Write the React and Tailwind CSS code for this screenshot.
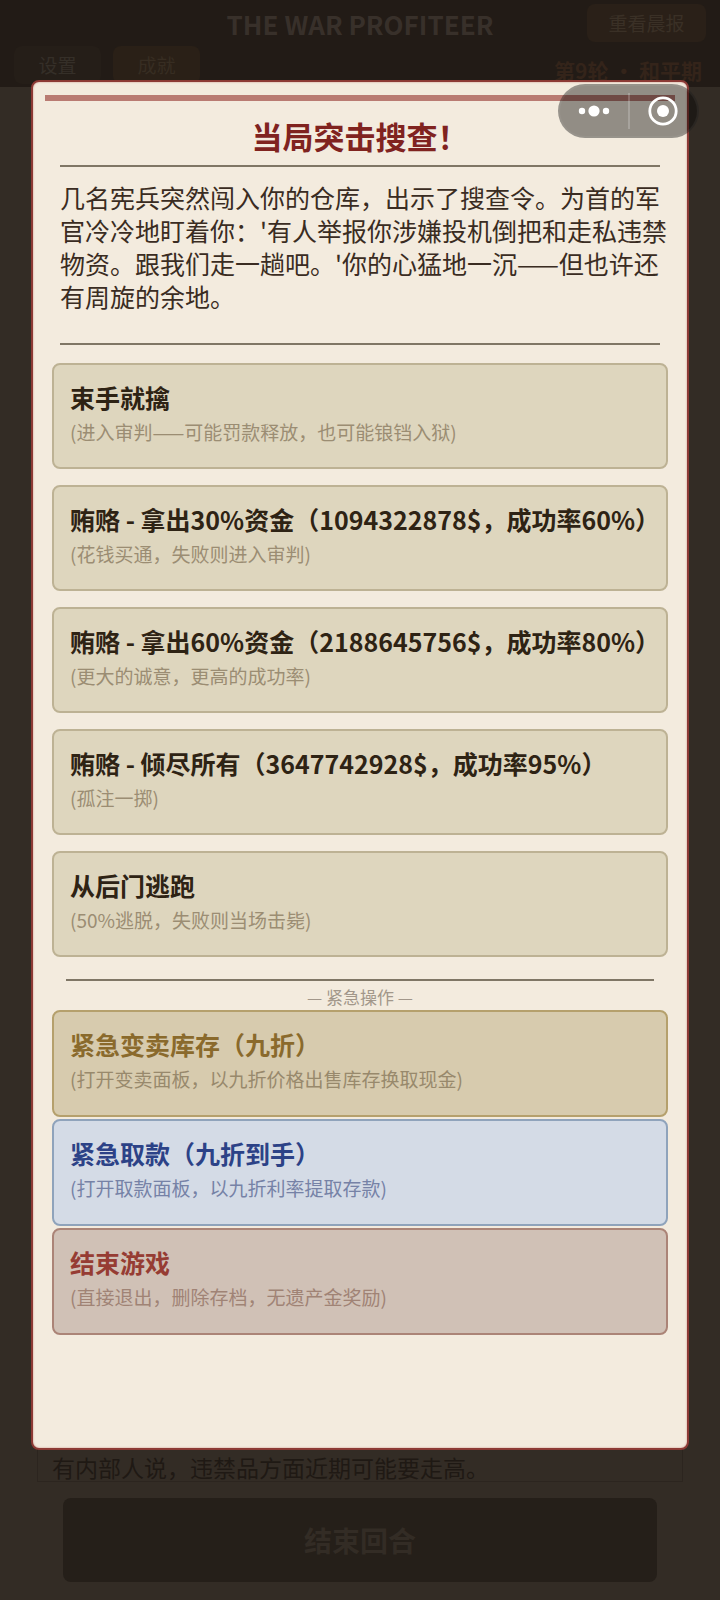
import clsx from "clsx";

const choices = [
  { title: "束手就擒", note: "(进入审判——可能罚款释放，也可能锒铛入狱)" },
  { title: "贿赂 - 拿出30%资金（1094322878$，成功率60%）", note: "(花钱买通，失败则进入审判)" },
  { title: "贿赂 - 拿出60%资金（2188645756$，成功率80%）", note: "(更大的诚意，更高的成功率)" },
  { title: "贿赂 - 倾尽所有（3647742928$，成功率95%）", note: "(孤注一掷)" },
  { title: "从后门逃跑", note: "(50%逃脱，失败则当场击毙)" },
];

const emergencyActions = [
  {
    title: "紧急变卖库存（九折）",
    note: "(打开变卖面板，以九折价格出售库存换取现金)",
    box: "border-[#b5a06c] bg-[#d7cbae]",
    titleColor: "text-[#8a6a2c]",
    noteColor: "text-[#98896c]",
  },
  {
    title: "紧急取款（九折到手）",
    note: "(打开取款面板，以九折利率提取存款)",
    box: "border-[#8fa3bb] bg-[#d4dbe6]",
    titleColor: "text-[#2c4287]",
    noteColor: "text-[#7682a6]",
  },
  {
    title: "结束游戏",
    note: "(直接退出，删除存档，无遗产金奖励)",
    box: "border-[#ab8477] bg-[#d0c1b6]",
    titleColor: "text-[#963c33]",
    noteColor: "text-[#a08375]",
  },
];

const ChoiceButton = ({ title, note, box, titleColor, noteColor }) => (
  <button
    className={clsx(
      "flex w-full flex-col items-start rounded-lg border-2 px-4 pt-3.5 text-left whitespace-nowrap",
      box ? "h-[107px]" : "h-[106px] border-[#bdb294] bg-[#ded6be]",
      box
    )}
  >
    <span className={clsx("text-[25px] leading-9 font-bold", titleColor || "text-[#2e2314]")}>{title}</span>
    <span className={clsx("text-[19px] leading-[34px]", noteColor || "text-[#9b8d73]")}>{note}</span>
  </button>
);

// Mini-program capsule in the top right corner
const Capsule = () => (
  <div className="absolute top-[84px] right-[21px] flex h-[54px] w-[141px] items-center rounded-full border-2 border-white/5 bg-black/40">
    <button aria-label="更多" className="flex flex-1 justify-center">
      <svg width="32" height="12" viewBox="0 0 32 12" fill="#fff">
        <circle cx="4" cy="6" r="3.2" />
        <circle cx="16" cy="6" r="5.6" />
        <circle cx="28" cy="6" r="3.2" />
      </svg>
    </button>
    <span className="h-9 w-0.5 bg-white/20" />
    <button aria-label="关闭" className="flex flex-1 justify-center">
      <svg width="30" height="30" viewBox="0 0 30 30">
        <circle cx="15" cy="15" r="13.2" fill="none" stroke="#fff" strokeWidth="2.8" />
        <circle cx="15" cy="15" r="6" fill="#fff" />
      </svg>
    </button>
  </div>
);

const GameScreen = () => (
  <div className="flex min-h-screen flex-col bg-[#332c25]">
    <header className="h-[87px] bg-[#221b16] px-3.5">
      <div className="grid h-[46px] grid-cols-[1fr_auto_1fr] items-center">
        <span />
        <h1 className="text-[26px] font-bold text-[#38302a]">THE WAR PROFITEER</h1>
        <button className="h-[38px] w-[119px] justify-self-end rounded-lg bg-[#2a2018] text-[19px] text-[#3a3026]">
          重看晨报
        </button>
      </div>
      <div className="flex items-start justify-between">
        <div className="flex gap-3">
          <button className="h-[38px] w-[87px] rounded-lg bg-[#251e18] text-[19px] text-[#352f28]">设置</button>
          <button className="h-[38px] w-[87px] rounded-lg bg-[#2a2017] text-[19px] text-[#372d22]">成就</button>
        </div>
        <p className="mt-2 pr-1 text-[21px] leading-8 font-bold text-[#34241a]">第9轮 · 和平期</p>
      </div>
    </header>
    <main className="mx-[37px] flex flex-1 flex-col justify-end border-x border-b border-[#2c251f] px-3.5">
      <p className="text-[23px] leading-7 text-[#1f1914]">有内部人说，违禁品方面近期可能要走高。</p>
    </main>
    <footer className="px-[63px] pt-4 pb-[18px]">
      <button className="h-21 w-full rounded-lg bg-[#251f19] text-[28px] font-bold text-[#332c25]">结束回合</button>
    </footer>
  </div>
);

const RaidDialog = () => (
  <section
    role="dialog"
    aria-labelledby="raid-title"
    className="absolute inset-x-[31px] top-20 rounded-lg border-2 border-[#8c3a35] bg-[#f3ebde] pt-[13px] pb-[113px] shadow-[inset_0_0_2px_#c98a80]"
  >
    <div className="mx-3 h-1.5 bg-[#b97b72]" />
    <div className="mx-[27px]">
      <h2 id="raid-title" className="mt-3.5 border-b-2 border-[#7f7665] pb-2 text-center text-[31px] leading-[42px] font-bold text-[#80231f]">
        当局突击搜查！
      </h2>
      <p className="-mr-2.5 mt-3.5 text-[25px] leading-[33px] text-[#3a2c22]">
        几名宪兵突然闯入你的仓库，出示了搜查令。为首的军官冷冷地盯着你：'有人举报你涉嫌投机倒把和走私违禁物资。跟我们走一趟吧。'你的心猛地一沉——但也许还有周旋的余地。
      </p>
      <hr className="mt-[30px] border-t-2 border-[#7f7665]" />
    </div>
    <div className="mx-[19px] mt-[18px] flex flex-col gap-4">
      {choices.map((choice) => (
        <ChoiceButton key={choice.title} {...choice} />
      ))}
    </div>
    <hr className="mx-[33px] mt-[22px] border-t-2 border-[#7f7665]" />
    <p className="pt-1 text-center text-[17px] leading-6 text-[#a2978a]">— 紧急操作 —</p>
    <div className="mx-[19px] mt-px flex flex-col gap-0.5">
      {emergencyActions.map((action) => (
        <ChoiceButton key={action.title} {...action} />
      ))}
    </div>
  </section>
);

const App = () => (
  <div className="relative font-['Noto_Sans_CJK_SC',sans-serif]">
    <GameScreen />
    <RaidDialog />
    <Capsule />
  </div>
);

export default App;
